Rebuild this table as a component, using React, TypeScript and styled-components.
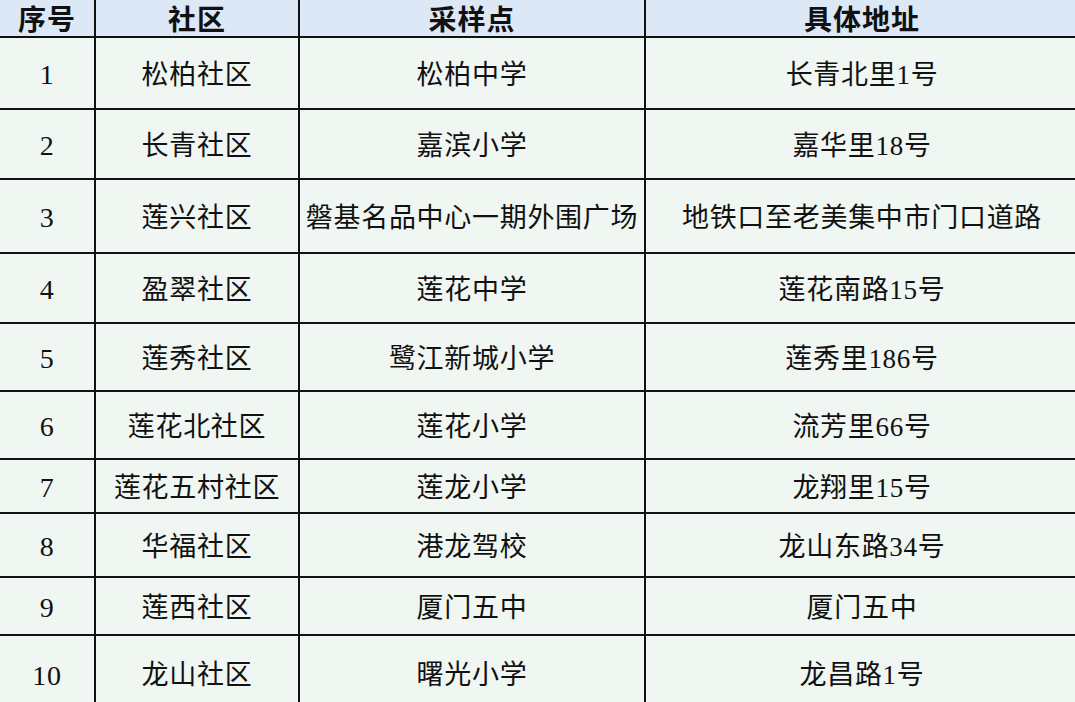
import React from 'react';
import styled, { createGlobalStyle } from 'styled-components';

const GlobalStyle = createGlobalStyle`
  html, body {
    margin: 0;
    padding: 0;
    background: #f0f6f2;
    overflow: hidden;
  }
`;

const Sheet = styled.table`
  width: 1078px;
  border-collapse: collapse;
  table-layout: fixed;
  font-family: 'Liberation Serif', 'Noto Sans CJK SC', serif;
  color: #111;
`;

const HeadCell = styled.th`
  height: 35px;
  padding: 0;
  background: #dce8f5;
  font-family: 'Noto Sans CJK SC', sans-serif;
  font-weight: 700;
  font-size: 28px;
  line-height: 36px;
  text-align: center;
  vertical-align: middle;
  border-bottom: 2px solid #111;
  border-right: 2px solid #111;
  white-space: nowrap;
  letter-spacing: 1px;

  &:last-child {
    border-right: none;
  }
`;

const BodyRow = styled.tr<{ $h: number }>`
  height: ${p => p.$h}px;
`;

const Cell = styled.td<{ $digits?: boolean }>`
  padding: 4px 0 0;
  background: #f0f6f2;
  font-size: ${p => (p.$digits ? '28px' : '27px')};
  font-weight: 400;
  line-height: 1.2;
  text-align: center;
  vertical-align: middle;
  border-bottom: 2px solid #111;
  border-right: 2px solid #111;
  white-space: nowrap;
  letter-spacing: 0.7px;

  &:last-child {
    border-right: none;
  }

  ${BodyRow}:last-child & {
    border-bottom: none;
  }
`;

const columns = [
  { title: '序号', width: 95 },
  { title: '社区', width: 204 },
  { title: '采样点', width: 346 },
  { title: '具体地址', width: 433 },
];

const rows = [
  { no: '1', area: '松柏社区', site: '松柏中学', addr: '长青北里1号', h: 72 },
  { no: '2', area: '长青社区', site: '嘉滨小学', addr: '嘉华里18号', h: 70 },
  { no: '3', area: '莲兴社区', site: '磐基名品中心一期外围广场', addr: '地铁口至老美集中市门口道路', h: 74 },
  { no: '4', area: '盈翠社区', site: '莲花中学', addr: '莲花南路15号', h: 70 },
  { no: '5', area: '莲秀社区', site: '鹭江新城小学', addr: '莲秀里186号', h: 68 },
  { no: '6', area: '莲花北社区', site: '莲花小学', addr: '流芳里66号', h: 68 },
  { no: '7', area: '莲花五村社区', site: '莲龙小学', addr: '龙翔里15号', h: 54 },
  { no: '8', area: '华福社区', site: '港龙驾校', addr: '龙山东路34号', h: 64 },
  { no: '9', area: '莲西社区', site: '厦门五中', addr: '厦门五中', h: 58 },
  { no: '10', area: '龙山社区', site: '曙光小学', addr: '龙昌路1号', h: 76 },
];

export default function App() {
  return (
    <>
      <GlobalStyle />
      <Sheet>
        <colgroup>
          {columns.map(c => (
            <col key={c.title} style={{ width: c.width }} />
          ))}
        </colgroup>
        <thead>
          <tr>
            {columns.map(c => (
              <HeadCell key={c.title}>{c.title}</HeadCell>
            ))}
          </tr>
        </thead>
        <tbody>
          {rows.map(r => (
            <BodyRow key={r.no} $h={r.h}>
              <Cell $digits>{r.no}</Cell>
              <Cell>{r.area}</Cell>
              <Cell>{r.site}</Cell>
              <Cell>{r.addr}</Cell>
            </BodyRow>
          ))}
        </tbody>
      </Sheet>
    </>
  );
}
